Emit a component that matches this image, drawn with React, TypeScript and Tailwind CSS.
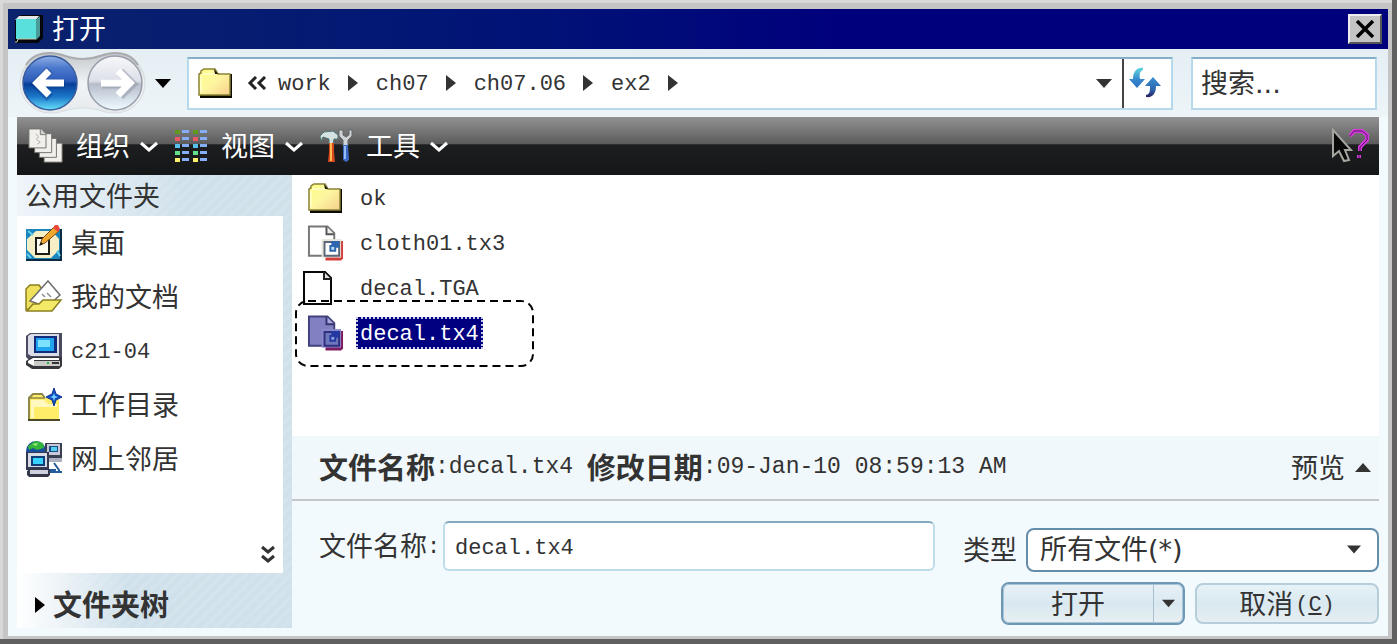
import React, { useState } from "react";

const MONO = "font-['Liberation_Mono','Noto_Sans_CJK_SC',monospace] text-[22px] leading-6 pt-1";
const CJK = "font-['Noto_Sans_CJK_SC',sans-serif] text-[27px] leading-9 pb-0.5";
const CJK_BOLD = "font-['Noto_Sans_CJK_SC',sans-serif] text-[29px] leading-9 pb-1 font-bold";
const FIELD = "font-['DejaVu_Sans','Noto_Sans_CJK_SC',sans-serif] text-[27px] leading-9";

function CubeIcon() {
  return (
    <svg width="30" height="30" viewBox="0 0 30 30" aria-hidden="true">
      <path d="M1 6 6 1h23v23l-5 5H1z" fill="#05070d" />
      <path d="M1 6 5 2h20l-3 4z" fill="#e5e8e8" />
      <path d="M22 6l4-4v20l-4 4z" fill="#4a9a98" />
      <path d="M2 5h20v20H2z" fill="#5ae0dc" />
      <path d="M1 28h2l1-3h18" stroke="#c4c8a8" fill="none" />
    </svg>
  );
}

function FolderIcon() {
  return (
    <svg width="36" height="32" viewBox="0 0 36 32" aria-hidden="true">
      <defs>
        <linearGradient id="folderFill" x1="0" y1="0" x2="1" y2="1">
          <stop offset="0" stopColor="#ffff86" />
          <stop offset="0.5" stopColor="#fdf5a0" />
          <stop offset="1" stopColor="#f6cf8c" />
        </linearGradient>
      </defs>
      <path d="M3 31h32V7h-2v21H3z" fill="#0b0b04" />
      <path d="M2 28V7l2-1V4l3-2h11l3 5h12v21z" fill="url(#folderFill)" stroke="#8a8336" strokeWidth="1.5" />
      <path d="M17 2l4 5h-3z" fill="#151508" />
      <path d="M5 7h13M4 9v16" stroke="#ffffd0" strokeWidth="1.5" fill="none" />
    </svg>
  );
}

function NavOrbs() {
  return (
    <svg width="128" height="64" viewBox="0 0 128 64" aria-hidden="true">
      <defs>
        <linearGradient id="rail" x1="0" y1="0" x2="0" y2="1">
          <stop offset="0" stopColor="#c4c7cb" />
          <stop offset="0.5" stopColor="#f1f4f6" />
          <stop offset="1" stopColor="#e6eaed" />
        </linearGradient>
        <linearGradient id="orbBlue" x1="0" y1="0" x2="0" y2="1">
          <stop offset="0" stopColor="#90afe4" />
          <stop offset="0.22" stopColor="#4c79cd" />
          <stop offset="0.46" stopColor="#2d5cb9" />
          <stop offset="0.52" stopColor="#083e99" />
          <stop offset="0.75" stopColor="#1a76c8" />
          <stop offset="1" stopColor="#67e2fb" />
        </linearGradient>
        <linearGradient id="orbGrey" x1="0" y1="0" x2="0" y2="1">
          <stop offset="0" stopColor="#f7f8fb" />
          <stop offset="0.46" stopColor="#dde0e9" />
          <stop offset="0.52" stopColor="#b7bdcb" />
          <stop offset="1" stopColor="#effcff" />
        </linearGradient>
      </defs>
      <path d="M32 2c13 0 17 6 33 6S84 2 97 2a30 30 0 0 1 0 60c-13 0-17-5-32-5s-20 5-33 5A30 30 0 0 1 32 2z" fill="url(#rail)" stroke="#d8dcdf" />
      <path d="M8 14C13 6 22 2 32 2c13 0 17 6 33 6S84 2 97 2c10 0 18 4 23 12" fill="none" stroke="#a9abae" strokeWidth="2" />
      <circle cx="32" cy="32" r="27" fill="url(#orbBlue)" stroke="#3a5c9c" strokeWidth="1.5" />
      <circle cx="97" cy="32" r="27" fill="url(#orbGrey)" stroke="#9a9eaa" strokeWidth="1.5" />
      <path d="M31 18 17 32l14 14M18 32h28" fill="none" stroke="#0b3580" strokeOpacity="0.35" strokeWidth="9" transform="translate(1 1)" />
      <path d="M31 20 19 32l12 12M19 32h27" fill="none" stroke="#fff" strokeWidth="7" />
      <path d="M101 20l12 12-12 12M112 32H83" fill="none" stroke="#8e94a2" strokeOpacity="0.5" strokeWidth="9" transform="translate(1 1)" />
      <path d="M100 20l12 12-12 12M112 32H83" fill="none" stroke="#fff" strokeWidth="7" />
    </svg>
  );
}

function Triangle({ dir, className = "" }: { dir: "down" | "up" | "right"; className?: string }) {
  const d = { down: "M0 0h16L8 9z", up: "M0 9h16L8 0z", right: "M0 0l10 8-10 8z" }[dir];
  const size = dir === "right" ? [10, 16] : [16, 9];
  return (
    <svg width={size[0]} height={size[1]} viewBox={`0 0 ${size[0]} ${size[1]}`} className={`shrink-0 ${className}`} fill="currentColor" aria-hidden="true">
      <path d={d} />
    </svg>
  );
}

function RefreshIcon() {
  return (
    <svg width="34" height="32" viewBox="0 0 34 32" aria-hidden="true">
      <defs>
        <linearGradient id="ra" x1="0" y1="0" x2="0" y2="1">
          <stop offset="0" stopColor="#5fd8dc" />
          <stop offset="0.6" stopColor="#3585cc" />
          <stop offset="1" stopColor="#2a6fc0" />
        </linearGradient>
        <linearGradient id="rb" x1="0" y1="0" x2="0" y2="1">
          <stop offset="0" stopColor="#3b8fd4" />
          <stop offset="0.6" stopColor="#2c68b0" />
          <stop offset="1" stopColor="#2a1f62" />
        </linearGradient>
      </defs>
      <path d="M15 1C9 0 5 5 5 12H1l8 9 8-9h-5c-1-5 0-8 3-9z" fill="url(#ra)" />
      <path d="M18 30c7 1 10-4 10-11h5l-8-9-8 9h5c0 5 0 8-4 9z" fill="url(#rb)" />
    </svg>
  );
}

function PagesIcon() {
  return (
    <svg width="38" height="38" viewBox="0 0 38 38" aria-hidden="true">
      <g fill="#f1f0ec" stroke="#706f6a" strokeWidth="1">
        <path d="M17 16h19v20H17z" />
        <path d="M12 11h18v20H12z" />
        <path d="M7 6h18v20H7z" />
        <path d="M1 1h13l5 5v15H1z" />
      </g>
      <path d="M13 1v6h6" fill="#cfcdc7" stroke="#777" />
      <path d="M8 6l3 3-2 3 4 3-3 2" stroke="#aaa" fill="none" />
    </svg>
  );
}

function ViewsIcon() {
  const dots = ["#5f9a1c", "#ea5a64", "#58c0ee", "#62e08a", "#f8f06a"];
  return (
    <svg width="34" height="34" viewBox="0 0 34 34" aria-hidden="true">
      {dots.map((c, i) => (
        <g key={c}>
          <rect x="1" y={1 + i * 7} width="5" height="4" fill={c} />
          <rect x="8" y={1 + i * 7} width="7" height="3" fill="#86aef5" />
          <rect x="19" y={1 + i * 7} width="5" height="4" fill={c} />
          <rect x="26" y={1 + i * 7} width="7" height="3" fill="#86aef5" />
        </g>
      ))}
    </svg>
  );
}

function ToolsIcon() {
  return (
    <svg width="34" height="36" viewBox="0 0 34 36" aria-hidden="true">
      <path d="M1 8l4-4 9-1 5 4v4h-4l-1 5h-4v-5L4 9 2 13z" fill="#d6e2e2" stroke="#4f7675" />
      <path d="M20 2v6l4 4v6h5v-6l4-4V2h-3v5l-3 2-3-2V2z" fill="#d0d3d5" stroke="#62686b" />
      <path d="M10 15h5v9l1 10H9l1-10z" fill="#d8481e" />
      <path d="M12 15v18" stroke="#ffb84b" strokeWidth="2" />
      <path d="M24 17h5l1 15-3 2-3-2z" fill="#3b69c4" />
      <path d="M26 18v13" stroke="#92bdf6" strokeWidth="2" />
    </svg>
  );
}

function HelpIcon() {
  return (
    <svg width="38" height="36" viewBox="0 0 38 36" aria-hidden="true">
      <path d="M19 8l4-5h8l5 4v5l-7 7v4M28 27v3" fill="none" stroke="#d63be0" strokeWidth="4" />
      <path d="M19 8l4-5h8l5 4v5l-7 7v4M28 27v3" fill="none" stroke="#5b0c63" strokeWidth="1" />
      <path d="M2 2v26l6-5 5 10 5-1-4-10h6z" fill="#090909" stroke="#a6a6a0" strokeWidth="2" />
    </svg>
  );
}

function DesktopIcon() {
  return (
    <svg width="38" height="38" viewBox="0 0 38 38" aria-hidden="true">
      <path d="M1 5h36v32H1z" fill="#0c2b43" />
      <path d="M1 5h34v30H1z" fill="#1a86bd" />
      <path d="M11 7h16l7 8v11l-8 8H10l-8-8V15z" fill="#f6eec4" />
      <path d="M2 30l4 4M32 27l3 5M3 7l5 4" stroke="#64d0ee" strokeWidth="2" />
      <path d="M11 14h13v16H11z" fill="#fffef0" stroke="#1c1c18" strokeWidth="2" />
      <path d="M15 21l2-6L29 3l5 4-14 12z" fill="#f0a92f" stroke="#7b4916" />
      <path d="M28 4l2-3h3l2 4-2 3z" fill="#e8483c" />
      <path d="M14 22l2-4 2 2z" fill="#161616" />
    </svg>
  );
}

function DocumentsIcon() {
  return (
    <svg width="38" height="34" viewBox="0 0 38 34" aria-hidden="true">
      <path d="M1 30V9l4-4h9l3 4h12v10z" fill="#efe15b" stroke="#8b8020" strokeWidth="1.5" />
      <path d="M5 21 23 1l12 14-13 12z" fill="#fff" stroke="#6c6c6c" strokeWidth="1.5" />
      <path d="M17 14l3 3M22 13l4 4" stroke="#8e8e8e" strokeWidth="1.5" />
      <path d="M2 31l6-7h6l4-4h18l-9 11z" fill="#f4ea67" stroke="#8b8020" strokeWidth="1.5" />
    </svg>
  );
}

function ComputerIcon() {
  return (
    <svg width="38" height="38" viewBox="0 0 38 38" aria-hidden="true">
      <path d="M1 4l4-3h32v24l-4 3H4l-3-3z" fill="#4a4a5e" />
      <path d="M3 4l3-2h28v22H6l-3-2z" fill="#d9dbe6" />
      <path d="M9 4h23v17H9z" fill="#112c7c" />
      <path d="M11 6h18v13H11z" fill="#20a4f0" />
      <path d="M13 8h12v7H13z" fill="#7ce2ff" />
      <path d="M1 29l6-4h30v9l-3 3H7l-6-4z" fill="#36363c" />
      <path d="M3 29l5-3h26v2H9v6l-6-3z" fill="#fff" />
      <path d="M9 29h26v5H9z" fill="#cacbc6" />
      <path d="M27 31h7" stroke="#333" strokeWidth="2" />
      <path d="M22 31h2" stroke="#2eb338" strokeWidth="2" />
    </svg>
  );
}

function WorkDirIcon() {
  return (
    <svg width="38" height="34" viewBox="0 0 38 34" aria-hidden="true">
      <path d="M4 32V10l4-4h9l3 4h14v22z" fill="#ffec69" />
      <path d="M4 32V10l4-4h9l3 4" fill="none" stroke="#8d8748" strokeWidth="2" />
      <path d="M4 10h16" stroke="#8d8748" strokeWidth="1.5" />
      <path d="M3 32h32" stroke="#4b4826" strokeWidth="2" />
      <path d="M6 12h13l4 4h9v3H9v11H6z" fill="#fff9bf" />
      <path d="M29 0l2 6 6 3-6 3-2 6-2-6-6-3 6-3z" fill="#1550c6" stroke="#0b3193" />
      <path d="M29 5l1 3 3 1-3 1-1 3-1-3-3-1 3-1z" fill="#75d6ff" />
    </svg>
  );
}

function NetworkIcon() {
  return (
    <svg width="38" height="38" viewBox="0 0 38 38" aria-hidden="true">
      <circle cx="11" cy="11" r="10" fill="#194e9e" />
      <path d="M3 6l7-5 8 2 1 5-7 2-4-2-4 2z" fill="#35b63b" />
      <path d="M7 4l6-1-2 3z" fill="#9bef7d" />
      <path d="M20 3h17v16H20z" fill="#3b3f52" />
      <path d="M22 4h13v11H22z" fill="#c8cada" />
      <path d="M24 6h9v6h-9z" fill="#174b84" />
      <path d="M26 7h6v4h-6z" fill="#56cdf2" />
      <path d="M24 18h13v4H24z" fill="#aeb1bf" />
      <path d="M1 12h23v18H1z" fill="#333951" />
      <path d="M3 13h19v14H3z" fill="#d8dae6" />
      <path d="M6 16h14v10H6z" fill="#123e77" />
      <path d="M8 18h10v6H8z" fill="#39d3ff" />
      <path d="M2 31l3-2h20v6l-2 2H4l-2-2z" fill="#333748" />
      <path d="M5 30h18v4H5z" fill="#ced0dc" />
      <path d="M29 23l5 7v2h-8v-2h5M26 32h11" fill="none" stroke="#245d9d" strokeWidth="2" />
    </svg>
  );
}

function TextureFileIcon({ selected = false }: { selected?: boolean }) {
  return (
    <svg width="38" height="38" viewBox="0 0 38 38" aria-hidden="true">
      <path d="M2 2h19l7 7v23H2z" fill={selected ? "#8180c2" : "#fff"} stroke={selected ? "#42417e" : "#777"} strokeWidth="2" />
      <path d="M20 2v8h8" fill={selected ? "#aaa9df" : "#eee"} stroke={selected ? "#35346e" : "#555"} strokeWidth="2" />
      <path d="M19 17h18v18l-2 2H19z" fill={selected ? "#7e1c61" : "#d33f3c"} />
      <path d="M15 15h20v19H15z" fill={selected ? "#8989c9" : "#e7e4da"} />
      <path d="M18 18h15v14H18z" fill={selected ? "#6f77bb" : "#fff"} stroke={selected ? "#302e7e" : "#596779"} strokeWidth="2" />
      <path d="M25 17h8v7h-3v4h-7v-7h2z" fill={selected ? "#2438a4" : "#2c66ae"} />
      <path d="M25 23h3v3h-3z" fill={selected ? "#8e9bd7" : "#bfdcf2"} />
    </svg>
  );
}

function BlankFileIcon() {
  return (
    <svg width="32" height="36" viewBox="0 0 32 36" aria-hidden="true">
      <path d="M2 2h21l6 6v26H2z" fill="#fff" stroke="#080808" strokeWidth="2" />
      <path d="M22 2v7h7" fill="#ddd" stroke="#222" strokeWidth="2" />
    </svg>
  );
}

function Chevron() {
  return (
    <svg width="18" height="16" viewBox="0 0 18 16" aria-hidden="true">
      <path d="M1 5l8 7 8-7" fill="none" stroke="#fff" strokeWidth="3" />
    </svg>
  );
}

function ToolButton({ icon, label }: { icon: React.ReactNode; label: string }) {
  return (
    <button type="button" className="flex items-center text-white">
      <span className="flex w-9 justify-center">{icon}</span>
      <span className={`${CJK} ml-3`}>{label}</span>
      <span className="ml-2.5 flex">
        <Chevron />
      </span>
    </button>
  );
}

const places = [
  { label: "桌面", icon: <DesktopIcon /> },
  { label: "我的文档", icon: <DocumentsIcon /> },
  { label: "c21-04", icon: <ComputerIcon />, mono: true },
  { label: "工作目录", icon: <WorkDirIcon /> },
  { label: "网上邻居", icon: <NetworkIcon /> },
];

const crumbs = ["work", "ch07", "ch07.06", "ex2"];

const files = [
  { name: "ok", icon: <FolderIcon /> },
  { name: "cloth01.tx3", icon: <TextureFileIcon /> },
  { name: "decal.TGA", icon: <BlankFileIcon />, flush: true },
  { name: "decal.tx4", icon: <TextureFileIcon selected />, selected: true },
];

function Sidebar() {
  return (
    <aside className="flex w-[275px] shrink-0 flex-col bg-[repeating-linear-gradient(135deg,#cfe0ea_0px,#d5e4ed_4px,#cfe0ea_8px)]">
      <h2 className={`${CJK} flex h-[41px] items-center bg-gradient-to-r from-[#eff5fa] to-transparent to-60% pl-2`}>公用文件夹</h2>
      <div className="mr-[9px] flex flex-1 flex-col bg-white">
        <ul>
          {places.map((p) => (
            <li key={p.label}>
              <a href="#" className="flex h-[54px] items-center pl-2">
                <span className="flex w-[38px] justify-center">{p.icon}</span>
                <span className={`${p.mono ? MONO : CJK} ml-2`}>{p.label}</span>
              </a>
            </li>
          ))}
        </ul>
        <button type="button" aria-label="更多" className="mt-auto mr-2 mb-2 self-end">
          <svg width="14" height="20" viewBox="0 0 14 20" aria-hidden="true">
            <path d="M1 2l6 5 6-5M1 11l6 5 6-5" fill="none" stroke="#333" strokeWidth="3" />
          </svg>
        </button>
      </div>
      <button type="button" className="flex h-[55px] items-center bg-gradient-to-r from-white to-transparent to-40% pl-[18px] pt-2">
        <Triangle dir="right" className="text-black" />
        <span className={`${CJK_BOLD} ml-2`}>文件夹树</span>
      </button>
    </aside>
  );
}

function FileList() {
  return (
    <ul className="min-h-[260px] flex-1 bg-white">
      {files.map((f) => (
        <li key={f.name} className="relative flex h-[45px] items-center">
          <button type="button" className="flex items-center">
            <span className={f.flush ? "flex w-[52px] pl-[10px]" : "flex w-[52px] pl-[15px]"}>{f.icon}</span>
            <span
              className={`${MONO} ml-3 border-2 border-dotted px-0.5 ${
                f.selected ? "border-[#c8c8e8] bg-[#000080] text-white" : "border-transparent"
              }`}
            >
              {f.name}
            </span>
          </button>
          {f.selected && (
            <svg width="240" height="68" viewBox="0 0 240 68" className="pointer-events-none absolute -top-2.5 left-[3px]" aria-hidden="true">
              <rect x="1" y="1" width="237" height="65" rx="12" fill="none" stroke="#000" strokeWidth="2" strokeDasharray="8 5" />
            </svg>
          )}
        </li>
      ))}
    </ul>
  );
}

function Details() {
  return (
    <div className="flex h-[63px] items-center justify-between bg-[#f1f8fb] pl-[27px] pr-2">
      <p className="flex items-center whitespace-pre font-['Liberation_Mono','Noto_Sans_CJK_SC',monospace] text-[23px]">
        <b className={CJK_BOLD}>文件名称</b>:decal.tx4 <b className={CJK_BOLD}>修改日期</b>:09-Jan-10 08:59:13 AM
      </p>
      <button type="button" className="flex items-center gap-2.5">
        <span className={CJK}>预览</span>
        <Triangle dir="up" />
      </button>
    </div>
  );
}

function Form() {
  const [name, setName] = useState("decal.tx4");
  return (
    <form className="flex h-[129px] border-t-2 border-[#c3c7ca] bg-[#f3fafe] pl-[27px]" onSubmit={(e) => e.preventDefault()}>
      <div className="flex flex-1 items-start pt-5">
        <label htmlFor="filename" className="flex h-[50px] w-[124px] shrink-0 items-center">
          <span className={CJK}>文件名称</span>
          <span className={MONO}>:</span>
        </label>
        <input
          id="filename"
          value={name}
          onChange={(e) => setName(e.target.value)}
          className={`${MONO} h-[50px] min-w-0 flex-1 rounded-md border-2 border-[#bedcea] border-t-[#83a9bf] bg-white pl-2.5`}
        />
      </div>
      <div className="ml-7 flex w-[416px] shrink-0 flex-col gap-2.5 pt-[27px]">
        <div className="flex items-center justify-between">
          <label htmlFor="filetype" className={CJK}>
            类型
          </label>
          <div className="relative w-[353px]">
            <select
              id="filetype"
              className={`${FIELD} h-11 w-full appearance-none rounded-lg border-2 border-[#648daa] bg-white pl-3`}
            >
              <option>所有文件(*)</option>
            </select>
            <Triangle dir="down" className="pointer-events-none absolute right-[18px] top-[17px] h-[9px] w-[14px]" />
          </div>
        </div>
        <div className="flex items-center justify-end gap-2.5">
          <div className="flex h-[43px] w-[184px] rounded-lg border-2 border-[#6f98b5] bg-gradient-to-b from-[#e8f2f7] via-[#d9e8f0] to-[#e8f0f3] outline-1 -outline-offset-3 outline-[#a5c4d8]">
            <button type="submit" className={`${CJK} flex-1`}>
              打开
            </button>
            <button type="button" aria-label="打开选项" className="flex w-[30px] items-center justify-center border-l border-[#a9c0ce]">
              <Triangle dir="down" className="w-[13px]" />
            </button>
          </div>
          <button
            type="button"
            className="flex h-[41px] w-[184px] items-center justify-center rounded-lg border-2 border-[#b5ced9] bg-gradient-to-b from-[#e6f2f7] via-[#d9e9f0] to-[#e6eef2]"
          >
            <span className={CJK}>取消</span>
            <span className={`${MONO} ml-0.5`}>
              (<u>C</u>)
            </span>
          </button>
        </div>
      </div>
    </form>
  );
}

export default function App() {
  return (
    <div className="flex min-h-screen flex-col border-b-[5px] border-r-[5px] border-[#606060] bg-[#c5c5c5] text-[#333]">
      <div className="flex flex-1 flex-col border-l-[3px] border-t-[3px] border-[#d8d8d8] pb-[3px] pl-[5px] pr-1 pt-1.5">
        <header className="flex h-10 items-center bg-gradient-to-r from-[#0b226d] to-[#00007c] to-60% pl-1.5 pr-1.5 text-white">
          <CubeIcon />
          <h1 className={`${CJK} ml-2 flex-1`}>打开</h1>
          <button
            type="button"
            aria-label="关闭"
            className="flex h-[30px] w-[34px] items-center justify-center border-2 border-b-[#555] border-l-[#eee] border-r-[#555] border-t-[#eee] bg-[#c4c4c4]"
          >
            <svg width="20" height="18" viewBox="0 0 20 18" aria-hidden="true">
              <path d="M2 1l16 16M18 1L2 17" stroke="#000" strokeWidth="3.5" />
            </svg>
          </button>
        </header>

        <div className="flex flex-1 flex-col bg-[#f3fafe] px-[9px] pb-2">
          <nav className="-mx-[9px] flex h-[68px] items-center bg-gradient-to-b from-[#e5eef3] to-[#edf5f9] pl-2.5 pr-[11px]">
            <div className="relative flex">
              <NavOrbs />
              <button type="button" aria-label="后退" className="absolute inset-y-0 left-0 w-1/2 rounded-full" />
              <button type="button" aria-label="前进" className="absolute inset-y-0 right-0 w-1/2 rounded-full" />
            </div>
            <button type="button" aria-label="最近位置" className="ml-[9px] text-black">
              <Triangle dir="down" />
            </button>
            <div className="ml-4 flex h-[53px] flex-1 items-center border-2 border-[#b6d9ec] border-t-[#86adc8] bg-white pl-2">
              <FolderIcon />
              <svg width="20" height="14" viewBox="0 0 20 14" className="ml-3.5" aria-hidden="true">
                <path d="M9 1L3 7l6 6M18 1l-6 6 6 6" fill="none" stroke="#222" strokeWidth="3" />
              </svg>
              <ol className="ml-[11px] flex items-center">
                {crumbs.map((c) => (
                  <li key={c} className="flex items-center">
                    <a href="#" className={MONO}>
                      {c}
                    </a>
                    <Triangle dir="right" className="ml-[17px] mr-[18px]" />
                  </li>
                ))}
              </ol>
              <button type="button" aria-label="历史记录" className="ml-auto mr-2.5">
                <Triangle dir="down" />
              </button>
              <button type="button" aria-label="刷新" className="flex h-full w-[49px] items-center border-l-2 border-[#444] pl-1">
                <RefreshIcon />
              </button>
            </div>
            <input
              type="search"
              aria-label="搜索"
              placeholder="搜索..."
              className={`${FIELD} ml-[18px] h-[53px] w-[186px] border-2 border-[#b6d9ec] border-t-[#86adc8] bg-white pl-2 placeholder:text-[#333]`}
            />
          </nav>

          <div
            role="toolbar"
            className="flex h-[58px] items-center justify-between bg-[linear-gradient(180deg,#929292_0%,#5c5c5c_46%,#1d1e20_48%,#151618_100%)] pl-[11px] pr-2.5"
          >
            <div className="flex items-center gap-[15px]">
              <ToolButton icon={<PagesIcon />} label="组织" />
              <ToolButton icon={<ViewsIcon />} label="视图" />
              <ToolButton icon={<ToolsIcon />} label="工具" />
            </div>
            <button type="button" aria-label="帮助">
              <HelpIcon />
            </button>
          </div>

          <div className="flex flex-1">
            <Sidebar />
            <main className="flex min-w-0 flex-1 flex-col">
              <FileList />
              <Details />
              <Form />
            </main>
          </div>
        </div>
      </div>
    </div>
  );
}
